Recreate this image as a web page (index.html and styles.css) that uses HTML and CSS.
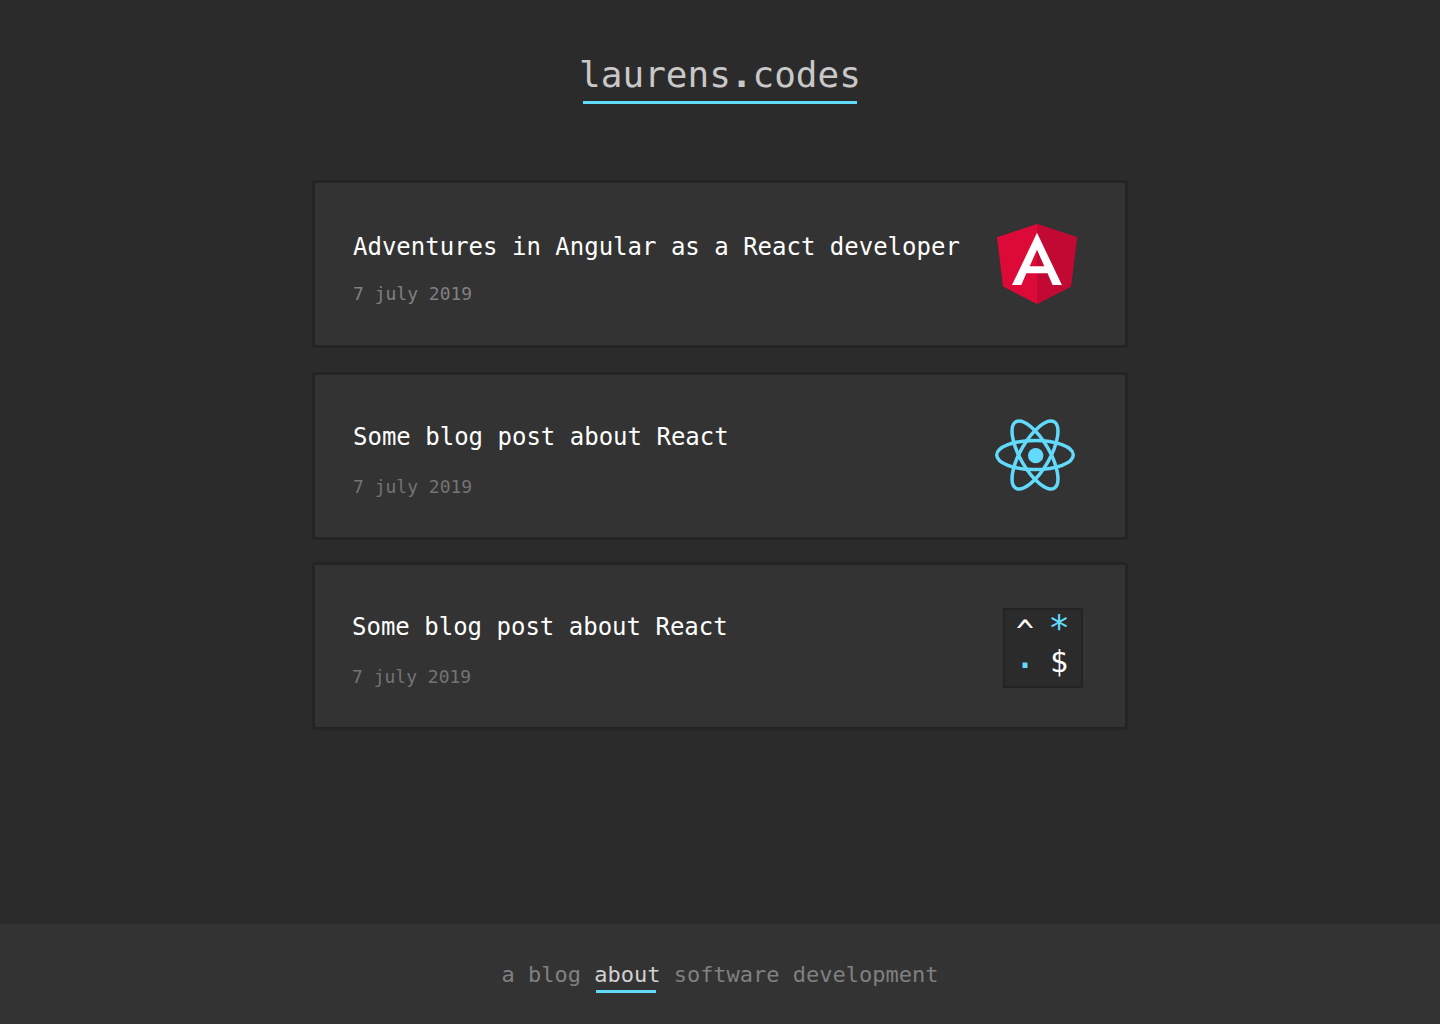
FILE: index.html
```html
<!DOCTYPE html>
<html lang="en">
<head>
  <meta charset="utf-8">
  <meta name="viewport" content="width=device-width, initial-scale=1">
  <title>laurens.codes</title>
  <link rel="stylesheet" href="styles.css">
</head>
<body>
  <header class="site-header">
    <h1 class="site-title"><a href="#">laurens<b>.</b>codes</a></h1>
  </header>

  <main class="posts">
    <article class="card card--angular">
      <div class="card-text">
        <h2 class="card-title"><a href="#">Adventures in Angular as a React developer</a></h2>
        <time class="card-date" datetime="2019-07-07">7 july 2019</time>
      </div>
      <svg class="card-icon" viewBox="31.9 30 186.2 200" preserveAspectRatio="none" aria-hidden="true">
        <path fill="#dd0a37" d="M125 30L31.9 63.2l14.2 123.1L125 230l78.9-43.7 14.2-123.1z"/>
        <path fill="#c10933" d="M125 30v200l78.9-43.7 14.2-123.1z"/>
        <path fill="#fff" d="M125 52.1L66.8 182.6h21.7l11.7-29.2h49.4l11.7 29.2H183zm17 83.3h-34l17-40.9z"/>
      </svg>
    </article>

    <article class="card card--react">
      <div class="card-text">
        <h2 class="card-title"><a href="#">Some blog post about React</a></h2>
        <time class="card-date" datetime="2019-07-07">7 july 2019</time>
      </div>
      <svg class="card-icon" viewBox="-11.5 -11.5 23 23" aria-hidden="true">
        <circle cx=".2" cy=".2" r="2.2" fill="#61dafb"/>
        <g fill="none" stroke="#61dafb">
          <ellipse rx="11" ry="4.2"/>
          <ellipse rx="11" ry="4.2" transform="rotate(60)"/>
          <ellipse rx="11" ry="4.2" transform="rotate(120)"/>
        </g>
      </svg>
    </article>

    <article class="card card--regex">
      <div class="card-text">
        <h2 class="card-title"><a href="#">Some blog post about React</a></h2>
        <time class="card-date" datetime="2019-07-07">7 july 2019</time>
      </div>
      <div class="card-icon regex-icon" aria-hidden="true">
        <span>^</span>
        <span class="accent star">*</span>
        <span class="accent dot">.</span>
        <span class="dollar">$</span>
      </div>
    </article>
  </main>

  <footer class="site-footer">
    <p>a blog <a class="about-link" href="#">about</a> software development</p>
  </footer>
</body>
</html>
```

FILE: styles.css
```css
* {
  box-sizing: border-box;
}

body {
  display: flex;
  flex-direction: column;
  min-height: 100vh;
  margin: 0;
  background: #2b2b2b;
  color: #fff;
  font-family: "DejaVu Sans Mono", monospace;
}

h1,
h2,
p {
  margin: 0;
  font-weight: 400;
}

a {
  color: inherit;
  text-decoration: none;
}

.site-header {
  display: flex;
  justify-content: center;
  padding: 55px 24px 76px;
}

.site-title {
  color: #c8c8c8;
  font-size: 36px;
  line-height: 40px;
}

.site-title::after {
  content: "";
  display: block;
  height: 3px;
  margin: 6px 4px 0;
  background: #61dafb;
}

.posts {
  display: flex;
  flex: 1;
  flex-direction: column;
  gap: 22px;
  width: 100%;
  max-width: 816px;
  margin: 0 auto;
  padding-bottom: 48px;
}

.card {
  display: flex;
  align-items: flex-start;
  justify-content: space-between;
  gap: 24px;
  padding: 46px 50px 38px 38px;
  border: 3px solid #242424;
  border-radius: 4px;
  background: #333;
}

.card--angular {
  margin-bottom: 2px;
  padding: 48px 48px 39px 38px;
}

.card--regex {
  padding-right: 42px;
  padding-left: 37px;
}

.card-text {
  display: flex;
  flex-direction: column;
  gap: 22px;
}

.card--angular .card-text {
  gap: 19px;
}

.card-title {
  font-size: 24px;
  line-height: 32px;
}

.card-date {
  color: #747474;
  font-size: 18px;
  line-height: 24px;
}

.card--angular .card-date {
  color: #808080;
}

.card-icon {
  flex: none;
  width: 80px;
  height: 80px;
  margin: -7px 0 -16px;
}

.card--react .card-icon {
  margin-top: -6px;
}

.card--regex .card-icon {
  margin-top: -3px;
}

.regex-icon {
  display: grid;
  grid-template-columns: 34px 34px;
  grid-template-rows: 32px 30px;
  place-content: center;
  padding: 0 2px 2px 0;
  border: 2px solid #232323;
  background: #2b2b2b;
  font-size: 30px;
  line-height: 32px;
  text-align: center;
}

.accent {
  color: #61dafb;
}

.star {
  font-size: 36px;
  line-height: 24px;
}

.dot {
  font-weight: 700;
  line-height: 20px;
}

.dollar {
  line-height: 28px;
}

.site-footer {
  padding: 37px 24px 35px;
  background: #333;
  color: #808080;
  font-size: 22px;
  line-height: 28px;
  text-align: center;
}

.about-link {
  position: relative;
  color: #d0d0d0;
}

.about-link::after {
  content: "";
  position: absolute;
  right: 4px;
  bottom: -6px;
  left: 2px;
  height: 3px;
  background: #61dafb;
}
```
